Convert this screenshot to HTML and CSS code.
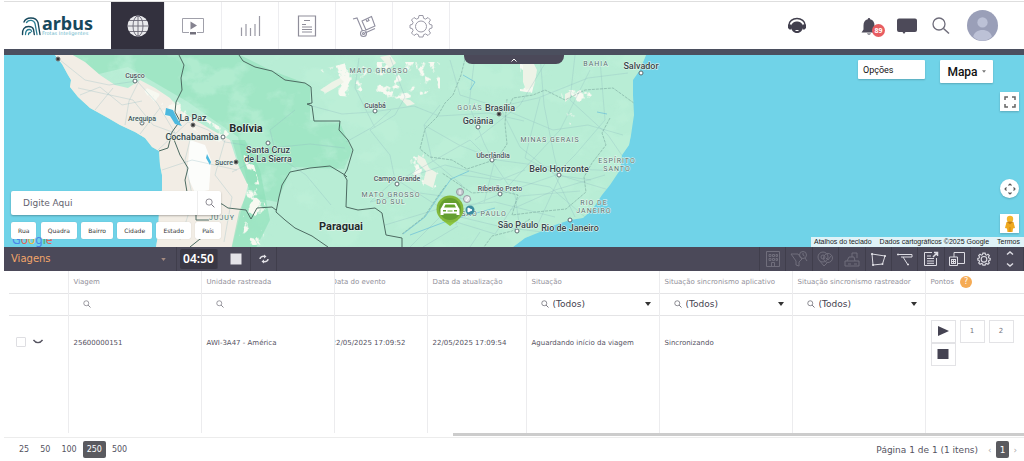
FILE: index.html
```html
<!DOCTYPE html>
<html lang="pt-BR">
<head>
<meta charset="utf-8">
<title>Arbus - Viagens</title>
<link rel="stylesheet" href="styles.css">
</head>
<body>
<svg class="defs" aria-hidden="true">
  <symbol id="lens" viewBox="0 0 16 16"><circle cx="6.5" cy="6.5" r="5" fill="none" stroke="currentColor" stroke-width="1.3"/><path d="M10.2 10.2L15 15" stroke="currentColor" stroke-width="1.6" fill="none"/></symbol>
  <symbol id="caret" viewBox="0 0 6 4"><path d="M0 0h6L3 4z" fill="currentColor"/></symbol>
</svg>
<header class="header">
  <a class="logo" href="#" aria-label="arbus frotas inteligentes">
    <svg class="logo-mark" viewBox="0 0 20 20" fill="none" stroke-linecap="round">
      <path d="M3 6C5 .5 15 .5 17 6.500l2 12" stroke="#17485c" stroke-width="1.400"/>
      <path d="M5.500 6.500C8 3 13 4 14 7.500l2 11" stroke="#2a7d92" stroke-width="1.300"/>
      <path d="M1.500 18.500c-.5-5 2-8 6-8 3 0 4.500 1 5 3l.8 5" stroke="#17485c" stroke-width="1.400"/>
      <path d="M4.500 18.500c0-3.500 1.500-5 4-5 1.500 0 2 .8 2.200 2M7.500 18.500c0-1.500.8-2 2-2" stroke="#2a7d92" stroke-width="1.300"/>
    </svg>
    <span class="logo-words"><strong>arbus</strong><small>Frotas Inteligentes</small></span>
  </a>
  <nav class="tabs" aria-label="Principal">
    <button class="tab active" aria-label="Mapa"><svg viewBox="0 0 24 24"><circle cx="12" cy="12" r="10.500" fill="#e9e9ec"/><g fill="none" stroke="#6a6875" stroke-width=".9"><ellipse cx="12" cy="12" rx="5" ry="10"/><path d="M12 1v22M1 12h22M3 6.500h18M3 17.500h18"/></g></svg></button>
    <button class="tab" aria-label="Vídeo"><svg viewBox="0 0 24 24"><path d="M8 18.500H1.500v-14h21v14H16" fill="none" stroke="#a0a0aa"/><path d="M9.500 7.500l6.500 4-6.500 4z" fill="#858390"/><path d="M9 18h6v2.500H9z" fill="#73717d"/></svg></button>
    <button class="tab" aria-label="Gráficos"><svg viewBox="0 0 24 24"><path d="M3.500 13.500V22M8 10v12M12.500 14v8M17 10v12M21.500 2v20" fill="none" stroke="#9b9aa5" stroke-width="1.200"/></svg></button>
    <button class="tab" aria-label="Relatórios"><svg viewBox="0 0 24 24"><path d="M3.500 2h17v20h-17z" fill="none" stroke="#8f8e9a" stroke-width="1.200"/><path d="M9 6.500h6M7 10.500h4M7 13h10M7 15.500h10M7 18h10" fill="none" stroke="#8f8e9a"/></svg></button>
    <button class="tab" aria-label="Entregas"><svg viewBox="0 0 24 24" fill="none" stroke="#9190a0" stroke-width="1.100"><path d="M1 5l4-1 5.500 13M10 7l9.500-4.500L23 12l-9 4z"/><path d="M14 5.500l1 2 2-1-1-2M13 19l10-4.500"/><circle cx="11.500" cy="19.500" r="3"/><circle cx="11.500" cy="19.500" r="1"/></svg></button>
    <button class="tab" aria-label="Configurações"><svg viewBox="0 0 24 24" fill="none" stroke="#9a99a6"><path id="gear" d="M10 1.500h4l.6 2.800 2 .8 2.400-1.600 2.500 2.500L19.900 8.400l.8 2 2.300.600v3l-2.300.6-.8 2 1.600 2.400-2.500 2.500-2.400-1.600-2 .8-.6 2.300h-4l-.6-2.300-2-.8L5 21.500 2.500 19l1.600-2.400-.8-2L1 14v-3l2.300-.6.8-2L2.500 6 5 3.500l2.400 1.600 2-.8z"/><circle cx="12" cy="12.500" r="5.500"/></svg></button>
  </nav>
  <div class="actions">
    <button class="act headset" aria-label="Suporte"><svg viewBox="0 0 20 20"><path d="M2 11V9a8 6.500 0 0 1 16 0v2" fill="none" stroke="#42404e" stroke-width="1.500"/><path d="M1 8.500h3v5H2.500L1 12zM19 8.500h-3v5h1.500L19 12z" fill="#42404e"/><path d="M3.500 10.500C5 6.500 7.500 5.500 10 5.500s5 1 6.500 5c-1 4-3 6.500-6.500 6.500s-5.500-2.500-6.500-6.500z" fill="#42404e"/><path d="M8.500 14.500h3" stroke="#fff"/></svg></button>
    <button class="act bell" aria-label="Notificações"><svg viewBox="0 0 20 20"><path d="M10 2c.8 0 1.200.6 1.200 1.300 3 .8 4.300 3 4.300 6.200v4l2 3h-15l2-3v-4c0-3.200 1.300-5.400 4.300-6.200C8.800 2.600 9.200 2 10 2zM8 17.500h4c-.5 1.500-3.500 1.500-4 0z" fill="#4d4a59"/></svg><span class="badge">89</span></button>
    <button class="act chat" aria-label="Mensagens"><svg viewBox="0 0 22 20"><path d="M3 2.500h16a2 2 0 0 1 2 2v9.500a2 2 0 0 1-2 2H9.500L8 18l-1.500-2H3a2 2 0 0 1-2-2V4.500a2 2 0 0 1 2-2z" fill="#4d4a59"/></svg></button>
    <button class="act find" aria-label="Pesquisar"><svg viewBox="0 0 20 20"><circle cx="8" cy="8" r="6" fill="none" stroke="#6e6c7a" stroke-width="1.300"/><path d="M12.500 12.500L18 17.500" stroke="#6e6c7a" stroke-width="1.500"/></svg></button>
    <button class="act avatar" aria-label="Perfil"><svg viewBox="0 0 30 30"><circle cx="15" cy="15" r="15" fill="#9a9fb8"/><circle cx="15" cy="12" r="5" fill="#bcc1d6"/><path d="M6 26c1-9 17-9 18 0-5 5-13 5-18 0z" fill="#bcc1d6"/></svg></button>
  </div>
</header>

<section class="map" aria-label="Mapa">
  <svg class="map-canvas" viewBox="4 55 1020 192" preserveAspectRatio="xMinYMin slice">
    <defs>
      <filter id="forest" x="0" y="0" width="1" height="1"><feTurbulence type="fractalNoise" baseFrequency=".022 .03" numOctaves="5" seed="7"/><feColorMatrix values="0 0 0 0 .52  0 0 0 0 .88  0 0 0 0 .70  7 0 0 0 -3.500"/></filter>
      <filter id="pale" x="0" y="0" width="1" height="1"><feTurbulence type="fractalNoise" baseFrequency=".08 .07" numOctaves="4" seed="12"/><feColorMatrix values="0 0 0 0 .93  0 0 0 0 .95  0 0 0 0 .88  0 12 0 0 -6.500"/><feComposite in2="SourceGraphic" operator="in"/></filter>
      <clipPath id="land"><path d="M55 55l7 9 6 11 3 5-1 7 8 10 12 11 18 10 12 7 15 7 10 6 7 9 7 4 1 14 2 10v15l-3 20-1 25-2 12h357l12-9 15-6 15-7 15-5 13-2 9-8 10-15 8-10 10-15 2-15 7-10 2-10 3-20-1-20v-15l7-10 6-15z"/></clipPath>
    </defs>
    <path d="M0 50h1030v200H0z" fill="#70d3e8"/>
    <g clip-path="url(#land)">
      <path d="M0 50h700v200H0z" fill="#b8edd5"/>
      <path d="M62 55h178l30 15 40 15v35l30 3 12 28-8 18-52-2-15 35-27-5-12-60-50-35-60-35-50 12z" fill="#95e3bd" opacity=".7"/>
      <path d="M40 55h650v192H40z" filter="url(#forest)" opacity=".5"/>
      <path d="M40 50h24l21 12 15 13 15 10 13 3 12-8 15 8 15 10 10 12 15 10 17 10 18 10 8 25 10 20-8 30-8 32H20z" fill="#f2ede5"/>
      <path d="M190 140l15 5 6 15-2 30-14 3-8-18z" fill="#fcfdfb"/>
      <path d="M232 140l8 28 9 20-10 24-8 38h24l15-30-10-50-15-30z" fill="#8cdfb8" opacity=".6"/>
      <path d="M320 70l30-8h90v28l-40 10-75-5zM410 155l20-2 12 30-12 8-18-15zM240 150l8 20-2 30-8 45h24l6-30-14-50zM520 55h20l-8 38-12-2zM560 90h40l-30 35zM140 85l40 18 50 30-10 10-60-30z" fill="#fff" filter="url(#pale)"/>
      <path d="M320 90l12-8 8-4 4 4-9 6-9 5zM380 57l10-2 6 8-6 5zM418 155l7 4 4 9 8 5-4 15-10-5 3-12-9-9zM523 64l10-2 4 8-3 16-8 4-3-8zM565 94l6-3v6l-6 5zM400 98l10 2 5 4-8 2z" fill="#edf3e7"/>
      <g class="roads">
        <path d="M60 60l25 20 24 5 28-4 20 22 18 30-22-8-20-25-55-12M80 95l20-8 22 18 20-4M95 110l18-22M125 125l4-24 10-20M140 134l20-26M158 150l30-28 20 8 17 12 20 3M162 170l30-10 45 10M165 205l25-8 20 18M190 140l-5 20 8 40-13 40M225 140l-10 35 17 22-8 45M232 172l20-10 18-14 40-4 35 4"/>
        <path d="M295 110l-25 20 6 25 30 20 25 30M312 106l30 8 30-2 42-6 25 10 50-3 35 8M346 142l25-14 20-18M375 128l-20-40 4-30M390 57l15 40-10 18-25 15 20 25 5 25-25 22 42-10 60 8M400 180l45-15 50 12 55 10 35 30M397 180l55 35 50 12 40 5M440 105l-16 20 8 35 30 25-6 40M424 125l35 20 38 15 60 8 60 3M450 60l10 35 38 12 40-9 50-20 40-5M475 55l-6 50 15 38 10 20-10 40M500 107l20 40 35 28 20 42M498 107l55 23 35-5 35 10M540 55l4 50 10 50 5 20 50 15M575 55l-5 45 38 35 15 22M600 60l5 60-30 35-20 20M470 140l-35 20-35 20M470 140l25 25 20 30 5 35M448 215l50-20 58-20 35 5M385 225l60-18 50-5 60 15M410 247l30-30 55 17 25-38 60-5M550 55l-30 50-45 35M540 98l-15 60 35 18-22 48M590 70l-30 60-60 65M458 226l-35 21M480 232l-10 15M510 210l45-20 50-15M525 170l-25 10-40-5"/>
      </g>
      <g class="river"><path d="M403 234l22-17 12-18 14-20 18-8M463 75l12 7-5 8M597 112l10 2M410 235l40-15 45-12"/></g>
      <g class="state"><path d="M466 55l-5 20-8 20-8 8-8 14-12 12-5 20 10 8 22 3 15 9 30-10 10-15-2-20 2-25M508 108l5-10 20-3 12-5 20 10 20-10 28-2 25 18M610 118l-8 15 4 12-14 18-8 14 2 15-20 17-30 3-24 3 6-20-16-4-30 2-30-20M530 219l-18 12-20 5-8 11M402 234l22-17 12-18 10-14"/></g>
      <g class="border"><path d="M179 55l5 10-3 13 1 12-6 12-1 10 5 9-8 11-4 16-9 3M173 137l7 18 8 13-3 12 2 12 9 8 26 4 6 4 18 2 5 9 6-11 15-1 4 3M196 208v12h13M190 247l10-8 15-5M239 55l4 6 12 6 17 4 13 9 20 3 6 4 1 16-5 1 5 2 2 15h26l-1 9 9 10 5 10-6 20-3 5 3 5-1 27 12 3 17-2 7 5 4 22 16 3v9M276 212l3-15 3-12 8-13 20-4 20-2 15 9 2 2M276 212l9 8 10 8 17 8 16 11"/></g>
      <path d="M166 108l7 2 5 10 4 6-7-2-5-8-5-1zM207 154l4 8-1 3-4-7z" fill="#4cb9df"/>
    </g>
    <g class="dots"><circle cx="135" cy="81" r="2"/><circle cx="142" cy="123" r="2"/><circle cx="223" cy="137" r="2"/><circle cx="268" cy="143" r="2"/><circle cx="375" cy="111" r="2"/><circle cx="478" cy="127" r="2"/><circle cx="492" cy="160" r="2"/><circle cx="559" cy="175" r="2"/><circle cx="641" cy="73" r="2"/><circle cx="397" cy="184" r="2"/><circle cx="500" cy="194" r="2"/><circle cx="517" cy="231" r="2"/><circle cx="570" cy="220" r="2"/></g>
    <g class="capitals"><circle cx="58" cy="59" r="2"/><circle cx="193" cy="125" r="2"/><circle cx="236" cy="162" r="2"/><circle cx="499" cy="114" r="2"/></g>
    <g class="town"><text x="135" y="78">Cusco</text><text x="142" y="121">Arequipa</text><text x="375" y="108">Cuiabá</text><text x="224" y="165">Sucre</text><text x="397" y="181">Campo Grande</text><text x="493" y="158">Uberlândia</text><text x="500" y="191">Ribeirão Preto</text></g>
    <g class="city"><text x="193" y="121">La Paz</text><text x="192" y="140">Cochabamba</text><text x="268" y="153">Santa Cruz</text><text x="268" y="162">de La Sierra</text><text x="500" y="111">Brasília</text><text x="478" y="124">Goiânia</text><text x="559" y="172">Belo Horizonte</text><text x="641" y="69">Salvador</text><text x="518" y="228">São Paulo</text><text x="570" y="231">Rio de Janeiro</text></g>
    <g class="country"><text x="246" y="132">Bolívia</text><text x="341" y="230">Paraguai</text></g>
    <g class="region"><text x="379" y="73">MATO GROSSO</text><text x="596" y="66">BAHIA</text><text x="470" y="110">GOIÁS</text><text x="550" y="142">MINAS GERAIS</text><text x="617" y="163">ESPÍRITO</text><text x="617" y="171">SANTO</text><text x="391" y="197">MATO GROSSO</text><text x="391" y="204">DO SUL</text><text x="594" y="205">RIO DE</text><text x="594" y="213">JANEIRO</text><text x="484" y="216">SÃO PAULO</text><text x="222" y="220">JUJUY</text></g>
    <g><circle cx="460" cy="192" r="3.500" fill="#c7ccd2" stroke="#969ba2"/><circle cx="467" cy="199" r="3.500" fill="#dfe3e6" stroke="#969ba2"/><circle cx="470" cy="210" r="4.500" fill="#3c8ca0"/><path d="M460 190v4M466 201l3-4M468 208l4 2-4 2z" stroke="#fff" fill="#fff"/>
      <path d="M450 226l-8-6h16z" fill="#8cc63f"/><circle cx="450" cy="209" r="13.500" fill="#83b83c"/><circle cx="450" cy="209" r="11" fill="#649e2f"/>
      <path d="M444 203h12l2.500 4.500 1 1.500v6h-3v-1.500h-13V215h-3v-6l1-1.500z" fill="#fff"/><path d="M445.500 204.500h9l1.500 3h-12z" fill="#63a32b"/><path d="M443 210h3v1.500h-3zM454 210h3v1.500h-3zM447.500 210.500h5v1h-5z" fill="#63a32b"/></g>
  </svg>
  <button class="handle" aria-label="Recolher"><svg viewBox="0 0 6 4"><path d="M.5 3.500L3 1l2.500 2.500" fill="none" stroke="#fff"/></svg></button>
  <div class="search-panel">
    <form class="search"><input type="text" placeholder="Digite Aqui" aria-label="Digite Aqui"><button type="button" aria-label="Buscar"><svg><use href="#lens"/></svg></button></form>
    <div class="chips"><button>Rua</button><button>Quadra</button><button>Bairro</button><button>Cidade</button><button>Estado</button><button>País</button></div>
  </div>
  <span class="google" aria-hidden="true"><i class="b">G</i><i class="r">o</i><i class="y">o</i><i class="b">g</i><i class="g">l</i><i class="r">e</i></span>
  <div class="map-menus"><button class="options">Opções</button><button class="maptype">Mapa <svg><use href="#caret"/></svg></button></div>
  <button class="ctl full" aria-label="Tela cheia"><svg viewBox="0 0 12 12"><path d="M1 4V1h3M8 1h3v3M11 8v3H8M4 11H1V8" fill="none" stroke="#666" stroke-width="1.500"/></svg></button>
  <button class="ctl pan" aria-label="Mover"><svg viewBox="0 0 12 12"><path d="M4.500 2.500L6 1l1.500 1.500M4.500 9.500L6 11l1.500-1.500M2.500 4.500L1 6l1.500 1.500M9.500 4.500L11 6 9.500 7.500" fill="none" stroke="#555" stroke-width="1.100"/></svg></button>
  <button class="ctl street" aria-label="Street View"><svg viewBox="0 0 12 18"><circle cx="6" cy="4" r="3.200" fill="#f3b52c"/><path d="M2.500 7h7l1.500 6-2 .5L8.500 17h-5L3 13.500 1 13z" fill="#efa91f"/><path d="M3.500 7h5L6 9zM6 12v5" stroke="#c17d15" stroke-width=".7" fill="#c17d15"/></svg></button>
  <div class="credits"><a href="#">Atalhos do teclado</a><span>Dados cartográficos ©2025 Google</span><a href="#">Termos</a></div>
</section>

<div class="toolbar">
  <button class="view">Viagens <svg><use href="#caret"/></svg></button>
  <span class="timer">04:50</span>
  <button class="tool" aria-label="Parar"><svg viewBox="0 0 14 14"><path d="M1.500 1.500h11v11h-11z" fill="#e4e3e8"/></svg></button>
  <button class="tool refresh" aria-label="Atualizar"><svg viewBox="0 0 14 14" fill="none" stroke="#e4e3e8" stroke-width="1.500"><path d="M3 7c0-2 2-3 4.500-2.500M11 7c0 2-2 3-4.500 2.500"/><path d="M7 2.500l2.500 2L7 6.500zM7 7.500l-2.500 2 2.500 2z" fill="#e4e3e8" stroke="none"/></svg></button>
  <div class="tools">
    <button class="off" aria-label="Cliente"><svg viewBox="0 0 18 18"><path d="M2.500 16.500v-15h13v15zM5 4.500h2v2H5zM8.500 4.500h2v2h-2zM12 4.500h1.500v2H12zM5 8.500h2v2H5zM8.500 8.500h2v2h-2zM12 8.500h1.500v2H12zM7.500 16.500v-4h3v4"/></svg></button>
    <button class="off" aria-label="Filtro"><svg viewBox="0 0 18 18"><path d="M1 4h7l4 5-3 3v4l-3-1v-4z"/><circle cx="13" cy="5" r="3.500"/><path d="M13 3v2l1.500 1M15 8l2 3"/></svg></button>
    <button class="off" aria-label="Local"><svg viewBox="0 0 18 18"><circle cx="7" cy="7" r="5"/><circle cx="7" cy="7" r="2"/><path d="M3 10l5 6 3-3"/><circle cx="12" cy="8" r="4.500"/><path d="M10 8l2 2 3-4"/></svg></button>
    <button class="off" aria-label="Motorista"><svg viewBox="0 0 18 18"><path d="M2 16v-5h14v5zM4 11l2-4h5l1 4M9 7V3h5v5M5 14h3M11 14h3"/></svg></button>
    <button aria-label="Cerca"><svg viewBox="0 0 18 18"><path d="M3 4l13 2-2.500 8L4 15z"/><path class="nodes" d="M2.500 3.500h1v1h-1zM15.500 5.500h1v1h-1zM13 13.500h1v1h-1zM3.500 14.500h1v1h-1z"/></svg></button>
    <button aria-label="Rota"><svg viewBox="0 0 18 18"><path d="M2 4.500h14v2.500H5M7 7l5 8"/><path class="nodes" d="M1.500 4h1v1h-1zM11.500 14h1v1h-1z"/></svg></button>
    <button aria-label="Relatório"><svg viewBox="0 0 18 18"><path d="M10 2.500H2.500v13h12V8M5 6h4M5 8.500h7M5 11h7M5 13.300h7"/><path d="M11 7l4-4M12 2.500h3.500V6" stroke-width="1.500"/></svg></button>
    <button aria-label="Janelas"><svg viewBox="0 0 18 18"><path d="M6 7V2.500h10.500v11H10"/><path d="M1.500 7h8v8.500h-8zM3.500 9.500h4M3.500 11.500h4M3.500 13.500h4M3.500 9v5M5.500 9v5M7.500 9v5"/></svg></button>
    <button aria-label="Configurar"><svg viewBox="-4 -4 32 32"><use href="#gear" stroke-width="2"/><circle cx="12" cy="12.500" r="5" stroke-width="2"/></svg></button>
    <button aria-label="Expandir"><svg viewBox="0 0 18 18"><path d="M6 4.500L9 2l3 2.500M6 13.500L9 16l3-2.500" stroke-width="1.500"/></svg></button>
  </div>
</div>

<main class="grid">
  <table>
    <colgroup><col class="c-check"><col class="c-wide"><col class="c-wide"><col class="c-event"><col class="c-update"><col class="c-wide"><col class="c-wide"><col class="c-wide"><col></colgroup>
    <thead>
      <tr class="heads"><th></th><th>Viagem</th><th>Unidade rastreada</th><th class="under">Data do evento</th><th>Data da atualização</th><th>Situação</th><th>Situação sincronismo aplicativo</th><th>Situação sincronismo rastreador</th><th>Pontos <button class="help" aria-label="Ajuda">?</button></th></tr>
      <tr class="filters"><td></td>
        <td><button class="lens" aria-label="Filtrar viagem"><svg><use href="#lens"/></svg></button></td>
        <td><button class="lens" aria-label="Filtrar unidade"><svg><use href="#lens"/></svg></button></td>
        <td></td><td></td>
        <td><label class="pick"><svg><use href="#lens"/></svg><select aria-label="Situação"><option>(Todos)</option></select><svg class="caret"><use href="#caret"/></svg></label></td>
        <td><label class="pick"><svg><use href="#lens"/></svg><select aria-label="Sincronismo aplicativo"><option>(Todos)</option></select><svg class="caret"><use href="#caret"/></svg></label></td>
        <td><label class="pick"><svg><use href="#lens"/></svg><select aria-label="Sincronismo rastreador"><option>(Todos)</option></select><svg class="caret"><use href="#caret"/></svg></label></td>
        <td></td></tr>
    </thead>
    <tbody>
      <tr>
        <td><div class="row-tools"><input type="checkbox" aria-label="Selecionar viagem"><button aria-label="Detalhes"><svg viewBox="0 0 10 6"><path d="M.5 1C3 4.500 7 4.500 9.500 1" fill="none" stroke="#555360" stroke-width="1.300"/></svg></button></div></td>
        <td><span class="cell">25600000151</span></td><td><span class="cell">AWI-3A47 - América</span></td><td class="under"><span class="cell">22/05/2025 17:09:52</span></td><td><span class="cell">22/05/2025 17:09:54</span></td><td><span class="cell">Aguardando início da viagem</span></td><td><span class="cell">Sincronizando</span></td><td></td>
        <td><div class="points"><button aria-label="Iniciar"><svg viewBox="0 0 12 12"><path d="M1 1l11 5-11 5z" fill="#454352"/></svg></button><button>1</button><button>2</button><button aria-label="Parar"><svg viewBox="0 0 12 12"><path d="M.5 1h11v10H.5z" fill="#454352"/></svg></button></div></td>
      </tr>
    </tbody>
  </table>
  <div class="scroll"><div class="thumb"></div></div>
</main>
<footer class="pager">
  <div class="sizes"><button>25</button><button>50</button><button>100</button><button class="on">250</button><button>500</button></div>
  <div class="pages"><span>Página 1 de 1 (1 itens)</span><button class="step" aria-label="Anterior">‹</button><button class="on">1</button><button class="step" aria-label="Próxima">›</button></div>
</footer>
</body>
</html>
```
FILE: styles.css
```css
* { box-sizing: border-box; }
body { margin: 0; padding: 1px 0 0 4px; background: #fff; color: #55535f; font: 7px/10px "DejaVu Sans", sans-serif; }
button, input, select { margin: 0; padding: 0; border: 0; background: none; color: inherit; font: inherit; }
button { cursor: pointer; }
button, .pick { display: flex; align-items: center; justify-content: center; }
a { color: inherit; text-decoration: none; }
svg { display: block; flex: none; }
.defs { position: absolute; width: 0; height: 0; }

.header { display: flex; height: 54px; border-top: 1px solid #dedede; border-bottom: 6px solid #4b4f5e; }
.logo { display: flex; align-items: center; gap: 1px; width: 107px; padding-left: 17px; }
.logo-mark { width: 20px; height: 20px; }
.logo-words { display: flex; flex-direction: column; color: #17485c; }
.logo-words strong { font: bold 18px/14px "Noto Sans", sans-serif; }
.logo-words small { font: 5px/6px "DejaVu Sans", sans-serif; color: #6fb8cc; }
.tabs { display: flex; }
.tab { width: 57px; border-right: 1px solid #ededf0; }
.tab.active { width: 54px; background: #33313e; }
.tab svg { width: 24px; height: 24px; }
.actions { display: flex; flex: 1; align-items: center; justify-content: flex-end; padding-right: 26px; }
.act svg { width: 20px; height: 20px; }
.act { position: relative; }
.headset { margin-right: 52px; }
.bell { margin-right: 17px; }
.chat { margin-right: 13px; }
.chat svg { width: 22px; }
.find { margin-right: 16px; }
.avatar svg { width: 31px; height: 31px; }
.badge { position: absolute; left: 13px; top: 8px; width: 13px; height: 13px; border-radius: 50%; background: #e85d61; color: #fff; font: bold 7px/13px "Noto Sans", sans-serif; }

.map { position: relative; height: 192px; overflow: hidden; background: #70d3e8; }
.map-canvas { width: 100%; height: 100%; }
.map-canvas text { text-anchor: middle; font-family: Roboto, sans-serif; fill: #46545a; paint-order: stroke; stroke: #e9f7ef; stroke-width: 1px; }
.roads { fill: none; stroke: #8fb8c0; stroke-width: 1; opacity: .3; }
.river { fill: none; stroke: #69bfd8; stroke-width: 1; opacity: .7; }
.state { fill: none; stroke: #6f9c94; stroke-width: 1; stroke-dasharray: 3 1; opacity: .5; }
.border { fill: none; stroke: #4d6b62; stroke-width: 1; stroke-linejoin: round; }
.dots { fill: #fff; stroke: #5c6c70; stroke-width: 1; }
.capitals { fill: #333; stroke: #777; stroke-width: 1; }
.map-canvas .town text { font-size: 7px; font-weight: 500; }
.map-canvas .city text { font-size: 9px; font-weight: 500; fill: #36454a; }
.map-canvas .country text { font-size: 11px; font-weight: 700; fill: #1d2b2b; }
.map-canvas .region text { font-size: 7px; letter-spacing: 1px; fill: #56706e; }
.handle { position: absolute; top: 0; left: 460px; width: 100px; height: 9px; border-radius: 0 0 8px 8px; background: #4b4959; }
.handle svg { width: 6px; height: 4px; }
.search-panel { position: absolute; z-index: 1; left: 7px; top: 136px; width: 210px; }
.search { display: flex; height: 24px; border-radius: 2px; background: #fff; box-shadow: 0 1px 2px #0004; }
.search input { flex: 1; min-width: 0; padding-left: 12px; font-size: 9px; }
.search input::placeholder { color: #64626e; opacity: 1; }
.search button { width: 24px; border-left: 1px solid #eee; color: #77757f; }
.search svg { width: 10px; height: 10px; }
.chips { display: flex; justify-content: space-between; margin-top: 7px; }
.chips button { height: 17px; padding: 0 7px; border-radius: 2px; background: #fff; box-shadow: 0 0 1px #0003; font-size: 6px; color: #333; }
.google { position: absolute; left: 8px; top: 178px; font: 12px/14px "Noto Sans", sans-serif; }
.google i { font-style: normal; }
.b { color: #4b86e8; } .r { color: #df6357; } .y { color: #efbd3c; } .g { color: #4aab6a; }
.map-menus { position: absolute; right: 31px; top: 5px; display: flex; align-items: flex-start; gap: 15px; }
.map-menus button { border-radius: 1px; background: #fff; box-shadow: 0 1px 2px #0003; color: #111; }
.map-menus .options { width: 67px; height: 19px; padding-left: 5px; justify-content: flex-start; font: 9px/12px Roboto, sans-serif; }
.map-menus .maptype { width: 53px; height: 23px; gap: 4px; font: 500 12px/14px Roboto, sans-serif; }
.maptype svg { width: 4px; height: 3px; color: #777; }
.ctl { position: absolute; right: 5px; width: 19px; height: 19px; background: #fff; box-shadow: 0 1px 2px #0003; }
.ctl svg { width: 12px; height: 12px; }
.full { top: 37px; }
.pan { top: 124px; border-radius: 50%; }
.street { top: 159px; }
.ctl.street svg { height: 18px; }
.credits { position: absolute; right: 0; bottom: 0; display: flex; gap: 8px; padding: 0 4px 0 3px; background: #e0f3f8; color: #222; font: 7px/10px "Liberation Sans", sans-serif; }

.toolbar { display: flex; height: 24px; background: #4b4959; color: #fff; }
.toolbar > * { border-right: 1px solid #403e4c; }
.view { width: 173px; padding: 0 10px 0 7px; justify-content: space-between; color: #f2a66a; font-size: 10px; }
.view svg { width: 5px; height: 3px; color: #a58b80; }
.timer { margin: 2px 3px; width: 38px; border-radius: 2px; background: #393744; font: 600 12px/20px "Noto Sans", sans-serif; text-align: center; }
.tool { width: 30px; }
.tool svg { width: 14px; height: 14px; }
.toolbar .refresh { width: 26px; }
.tools { display: grid; grid-template-columns: repeat(10, 1fr); width: 265px; margin-left: auto; }
.tools button { border-left: 1px solid #403e4c; }
.tools svg { width: 18px; height: 18px; fill: none; stroke: #dddce3; stroke-width: 1; }
.tools .off svg { opacity: .25; }
.nodes { fill: #fff; }

.grid { padding-left: 5px; }
table { width: 100%; table-layout: fixed; border-collapse: collapse; }
.c-check { width: 59px; } .c-wide { width: 133px; } .c-event { width: 93px; } .c-update { width: 99px; }
th, td { padding: 0 0 0 5px; border-left: 1px solid #ececee; text-align: left; white-space: nowrap; overflow: hidden; font-weight: 400; }
th:first-child, td:first-child { border-left: 0; }
thead tr { height: 22px; border-bottom: 1px solid #e4e4e6; }
.heads th { color: #92909a; }
.help { display: inline-block; width: 12px; height: 12px; margin-left: 4px; border-radius: 50%; background: #f5ab55; color: #fff; font-size: 8px; line-height: 12px; vertical-align: middle; }
.lens { margin-left: 9px; color: #6b6974; }
.lens svg, .pick svg { width: 8px; height: 8px; }
.pick { padding: 0 8px 0 9px; gap: 4px; color: #55535f; }
.pick select { flex: 1; min-width: 0; appearance: none; color: #44424e; font: 9px/14px "DejaVu Sans", sans-serif; }
.pick .caret { width: 6px; height: 4px; color: #333; }
tbody td { height: 118px; padding-top: 4px; vertical-align: top; }
.cell { display: block; margin-top: 18px; }
.under { padding-left: 0; text-indent: -3px; }
.row-tools { display: flex; align-items: center; gap: 7px; margin: 17px 0 0 2px; }
.row-tools input { appearance: none; width: 10px; height: 10px; border: 1px solid #dedee2; border-radius: 1px; }
.row-tools svg { width: 10px; height: 6px; }
.points { display: grid; grid-template-columns: repeat(3, 25px); column-gap: 4px; }
.points button { height: 23px; border: 1px solid #e3e3e6; color: #777580; }
.points svg { width: 12px; height: 12px; }
.scroll { margin-left: -5px; padding-bottom: 1px; border-bottom: 1px solid #ececec; }
.thumb { width: 56%; height: 3px; margin-left: auto; background: #ccc; }

.pager { display: flex; align-items: center; justify-content: space-between; padding: 3px 3px 3px 10px; font-size: 8px; }
.sizes, .pages { display: flex; align-items: center; }
.sizes { gap: 1px; }
.pager button { height: 17px; padding: 0 5px; border-radius: 2px; }
.pager .on { padding: 0 4px; background: #5a5a5f; color: #fff; }
.pages { font-size: 9px; }
.pager .step { padding: 0 4px; color: #aaa; }
.pages span { margin-right: 6px; }
```
